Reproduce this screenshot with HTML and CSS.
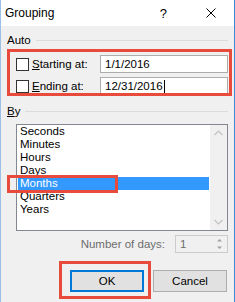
FILE: index.html
```html
<!DOCTYPE html>
<html>
<head>
<meta charset="utf-8">
<link rel="stylesheet" href="styles.css">
</head>
<body>
<div class="dialog">
  <div class="titlebar">
    <span class="title">Grouping</span>
    <span class="help">?</span>
    <svg class="close" width="10" height="10" viewBox="0 0 10 10"><path d="M0.5 0.5 L9.5 9.5 M9.5 0.5 L0.5 9.5" stroke="#000" stroke-width="1" fill="none"/></svg>
  </div>
  <div class="content">
    <div class="group-head"><span>Auto</span><i class="rule"></i></div>
    <div class="auto">
      <div class="row">
        <span class="cb"></span>
        <span class="lbl"><u>S</u>tarting at:</span>
        <span class="field">1/1/2016</span>
      </div>
      <div class="row row2">
        <span class="cb"></span>
        <span class="lbl"><u>E</u>nding at:</span>
        <span class="field">12/31/2016<i class="caret"></i></span>
      </div>
      <div class="mark mark-auto"></div>
    </div>
    <div class="group-head by-head"><span><u>B</u>y</span><i class="rule"></i></div>
    <div class="listbox">
      <div class="items">
        <div class="item">Seconds</div>
        <div class="item">Minutes</div>
        <div class="item">Hours</div>
        <div class="item">Days</div>
        <div class="item selected">Months</div>
        <div class="item">Quarters</div>
        <div class="item">Years</div>
      </div>
      <div class="scrollbar">
        <svg width="17" height="17" viewBox="0 0 17 17"><path d="M4.5 10 L8.5 6 L12.5 10" stroke="#c2c2c2" stroke-width="1.2" fill="none"/></svg>
        <svg width="17" height="17" viewBox="0 0 17 17"><path d="M4.5 7 L8.5 11 L12.5 7" stroke="#c2c2c2" stroke-width="1.2" fill="none"/></svg>
      </div>
      <div class="mark mark-months"></div>
    </div>
    <div class="days">
      <span class="days-lbl">Number of days:</span>
      <div class="spin">
        <span class="spin-val">1</span>
        <div class="spin-btns">
          <svg width="13" height="8" viewBox="0 0 13 8"><path d="M4 5.5 L6.5 3 L9 5.5 Z" fill="#a0a0a0"/></svg>
          <svg width="13" height="8" viewBox="0 0 13 8"><path d="M4 2.5 L6.5 5 L9 2.5 Z" fill="#a0a0a0"/></svg>
        </div>
      </div>
    </div>
    <div class="buttons">
      <div class="ok-wrap">
        <button class="btn ok">OK</button>
        <div class="mark mark-ok"></div>
      </div>
      <button class="btn">Cancel</button>
    </div>
  </div>
</div>
</body>
</html>
```
FILE: styles.css
```css
* { box-sizing: border-box; margin: 0; padding: 0; }
html, body { width: 235px; height: 302px; overflow: hidden; }
body {
  font-family: "Liberation Sans", Arial, sans-serif;
  font-size: 11.5px;
  color: #000;
  background: #f0f0f0;
}
.dialog {
  width: 235px;
  height: 302px;
  border-left: 1px solid #9cc1e8;
  border-right: 1px solid #3b8ad8;
  background: #f0f0f0;
  display: flex;
  flex-direction: column;
}
.titlebar {
  height: 26px;
  flex: none;
  background: #fff;
  display: flex;
  align-items: center;
  padding-left: 4px;
}
.title { flex: 1; font-size: 12px; }
.help { font-size: 13px; margin-right: 39px; }
.close { margin-right: 18px; }
.content {
  padding: 7px 6px 0 6px;
  display: flex;
  flex-direction: column;
}
.group-head {
  height: 14px;
  display: flex;
  align-items: center;
  gap: 5px;
}
.rule { flex: 1; height: 1px; background: #dcdcdc; }
.auto {
  position: relative;
  padding: 8px 0 0 9px;
}
.row {
  height: 18px;
  display: flex;
  align-items: center;
}
.row2 { margin-top: 4px; }
.cb {
  width: 13px;
  height: 13px;
  border: 1px solid #333;
  background: #fff;
  margin-right: 3px;
}
.lbl { flex: 1; }
.field {
  width: 128px;
  height: 18px;
  border: 1px solid #adadad;
  background: #fff;
  padding-left: 4px;
  display: flex;
  align-items: center;
}
.caret { width: 1px; height: 13px; background: #000; margin-left: 1px; }
.mark {
  position: absolute;
  border: 3px solid #e84b3c;
}
.mark-auto { left: 0; right: -4px; top: 2px; height: 47px; }
.by-head { margin-top: 9px; }
.listbox {
  position: relative;
  margin: 6px 0 0 9px;
  height: 107px;
  border: 1px solid #828790;
  background: #fff;
  display: flex;
}
.items { flex: 1; padding: 0 1px 0 1px; }
.item { height: 13px; line-height: 13px; padding-left: 2px; }
.item.selected { background: #3399ff; color: #fff; }
.scrollbar {
  width: 17px;
  background: #f0f0f0;
  display: flex;
  flex-direction: column;
  justify-content: space-between;
}
.mark-months { left: -10px; top: 50px; width: 111px; height: 18px; }
.days {
  margin-top: 4px;
  height: 18px;
  display: flex;
  justify-content: flex-end;
  align-items: center;
}
.days-lbl { color: #6d6d6d; margin-right: 10px; }
.spin {
  width: 53px;
  height: 18px;
  border: 1px solid #cccccc;
  background: #f0f0f0;
  display: flex;
  align-items: center;
}
.spin-val { flex: 1; color: #6d6d6d; padding-left: 4px; }
.spin-btns { display: flex; flex-direction: column; margin-right: 1px; }
.spin-btns svg { display: block; }
.buttons {
  margin-top: 17px;
  display: flex;
  justify-content: flex-end;
  gap: 9px;
  padding-right: 1px;
}
.ok-wrap { position: relative; }
.btn {
  width: 74px;
  height: 22px;
  font-family: inherit;
  font-size: 11.5px;
  color: #000;
  background: #e1e1e1;
  border: 1px solid #adadad;
}
.btn.ok { border: 2px solid #0078d7; display: block; }
.mark-ok { left: -11px; right: -7px; top: -9px; bottom: -7px; }
```
